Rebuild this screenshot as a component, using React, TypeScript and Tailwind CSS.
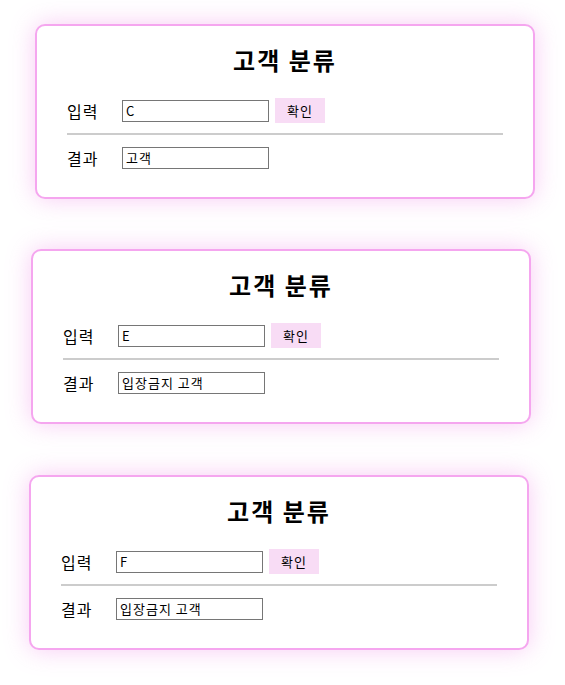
import React from 'react';

interface CardProps {
  input: string;
  result: string;
  offset: string;
}

const font = { fontFamily: '"Noto Sans CJK KR", "Noto Sans", sans-serif' };

const ClassifyCard: React.FC<CardProps> = ({ input, result, offset }) => {
  return (
    <div
      className={`${offset} w-[500px] h-[175px] bg-white border-2 border-[#f5a6ef] rounded-[10px] shadow-[0_0_24px_rgba(240,140,230,0.45)] px-[30px] pt-[18px]`}
    >
      <h2 className="text-center text-[24px] leading-[32px] font-bold text-black tracking-[2px]">고객 분류</h2>

      <div className="flex items-center h-[25px] mt-[22px]">
        <span className="w-[55px] text-[16px] text-black tracking-[1px]">입력</span>
        <input
          readOnly
          value={input}
          className="w-[147px] h-[22px] border border-[#767676] px-[3px] text-[13px] text-black tracking-[0.5px] outline-none"
        />
        <button className="ml-[6px] w-[50px] h-[25px] bg-[#f8dcf5] text-[13px] text-black tracking-[1px]">확인</button>
      </div>

      <div className="h-[2px] bg-[#cccccc] mt-[10px] mb-[10px]" />

      <div className="flex items-center h-[25px]">
        <span className="w-[55px] text-[16px] text-black tracking-[1px]">결과</span>
        <input
          readOnly
          value={result}
          className="w-[147px] h-[22px] border border-[#767676] px-[3px] text-[13px] text-black tracking-[1px] outline-none"
        />
      </div>
    </div>
  );
};

const App: React.FC = () => {
  return (
    <div className="w-[565px] min-h-[685px] bg-white pt-[24px]" style={font}>
      <ClassifyCard input="C" result="고객" offset="ml-[35px]" />
      <div className="h-[50px]" />
      <ClassifyCard input="E" result="입장금지 고객" offset="ml-[31px]" />
      <div className="h-[51px]" />
      <ClassifyCard input="F" result="입장금지 고객" offset="ml-[29px]" />
    </div>
  );
};

export default App;
